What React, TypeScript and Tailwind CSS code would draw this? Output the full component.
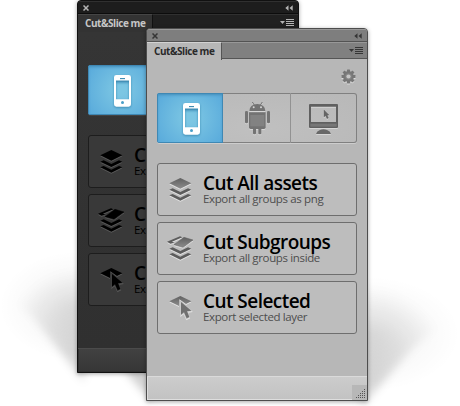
import React from "react";

type Theme = "dark" | "light";

const font = "font-['Open_Sans','Noto_Sans',sans-serif]";

function Layers({ kind, theme }: { kind: "all" | "sub" | "one"; theme: Theme }) {
  const dark = theme === "dark";
  const id = `fill-${kind}-${theme}`;
  const edge = dark ? "#000" : "#5c5c5c";
  const card = dark ? "#393939" : "#c4c4c4";
  return (
    <svg
      className={`h-7 w-7 shrink-0 ${dark ? "drop-shadow-[0_1px_0_#5a5a5a]" : "drop-shadow-[0_1px_0_#e4e4e4]"}`}
      viewBox="0 0 84 84"
    >
      <defs>
        <linearGradient id={id} x1="0" y1="0" x2="0" y2="1">
          <stop offset="0" stopColor={dark ? "#000" : "#606060"} />
          <stop offset="1" stopColor={dark ? "#000" : "#8c8c8c"} />
        </linearGradient>
      </defs>
      {kind === "all" && <path d="M10 22 43 6 76 22 43 38Z" fill={`url(#${id})`} />}
      {kind === "sub" && (
        <>
          <path d="M3 20 42 4 49 7 18 20 25 23 13 26Z" fill={edge} />
          <path d="M24 29 54 7 81 15 51 37Z" fill={`url(#${id})`} stroke={edge} strokeWidth="1.5" />
        </>
      )}
      {kind !== "one" && (
        <>
          <path d="M10 41 20 37 43 48 66 37 76 41 43 57Z" fill={edge} />
          <path d="M10 58 20 54 43 65 66 54 76 58 43 74Z" fill={edge} />
        </>
      )}
      {kind === "one" && (
        <>
          <path d="M10 22 43 6 76 22 60 30 40 16 39 36Z" fill={`url(#${id})`} />
          <path
            d="M45 24V62L54 55 62 73 70 69 63 52 76 50Z"
            fill={dark ? "#000" : "#707070"}
            stroke={card}
            strokeWidth="4"
            paintOrder="stroke"
          />
        </>
      )}
    </svg>
  );
}

function Action({ kind, theme, title, note }: { kind: "all" | "sub" | "one"; theme: Theme; title: string; note: string }) {
  const dark = theme === "dark";
  return (
    <div
      className={`flex h-[53px] w-[200px] gap-[9px] rounded-[3px] border pl-2 pt-3 ${
        dark ? "border-[#1d1d1d] bg-[#393939]" : "border-[#6e6e6e] bg-[#bdbdbd]"
      }`}
    >
      <Layers kind={kind} theme={theme} />
      <div className="-mt-[3px] whitespace-nowrap">
        <div className="text-[19px] font-semibold leading-[20px] tracking-[-0.55px] text-black">{title}</div>
        <div className={`-mt-px text-[11.5px] leading-[13px] tracking-[-0.36px] ${dark ? "text-black" : "text-[#4d4d4d]"}`}>
          {note}
        </div>
      </div>
    </div>
  );
}

function Phone() {
  return (
    <svg className="h-[50px] w-[66px] drop-shadow-[0_1px_1px_#3d8cb4]" viewBox="471 279 198 150">
      <path
        fill="#fff"
        fillRule="evenodd"
        d="M556 309H593Q600 309 600 316V397Q600 404 593 404H556Q549 404 549 397V316Q549 309 556 309ZM555 326V382H594V326ZM567 318V321H582V318Z"
      />
      <path d="M555 327.500H594" stroke="#428eb4" strokeWidth="3" />
      <path d="M567 320H582" stroke="#428eb4" strokeWidth="3" />
      <circle cx="574.500" cy="391.500" r="4.500" fill="#4a9fc8" />
    </svg>
  );
}

function Robot() {
  return (
    <svg className="h-[50px] w-[67px] drop-shadow-[0_1px_0_#d6d6d6]" viewBox="669 279 201 150">
      <g fill="#737373">
        <path d="M748 333Q749 313 772 312 795 313 796 333Z" />
        <path d="M757 306 764 317M787 306 780 317" stroke="#737373" strokeWidth="3" />
        <path d="M747 337H797V382Q797 387 792 387H752Q747 387 747 382Z" />
        <rect x="735" y="333" width="9" height="37" rx="4" />
        <rect x="801" y="333" width="9" height="37" rx="4" />
        <rect x="759" y="382" width="9" height="21" rx="3" />
        <rect x="775" y="382" width="9" height="21" rx="3" />
      </g>
      <rect x="751" y="345" width="42" height="34" fill="#828282" />
      <circle cx="761" cy="322" r="3" fill="#d4d4d4" />
      <circle cx="783" cy="322" r="3" fill="#d4d4d4" />
    </svg>
  );
}

function Monitor() {
  return (
    <svg className="h-[50px] w-[66px] drop-shadow-[0_1px_0_#d6d6d6]" viewBox="873 279 198 150">
      <path
        fill="#606060"
        fillRule="evenodd"
        d="M930 312H1011Q1014 312 1014 315V381Q1014 384 1011 384H930Q927 384 927 381V315Q927 312 930 312ZM933 320V366H1008V320Z"
      />
      <path d="M931 371H1010V380H931Z" fill="#777" />
      <path d="M948 402Q950 393 960 390 970 385 981 390 991 393 993 402Z" fill="#686868" />
      <path d="M972 330V351L977 347 981 356 985 354 982 346 987 345Z" fill="#656565" stroke="#656565" strokeWidth="1" />
    </svg>
  );
}

function Gear() {
  return (
    <svg className="h-[15px] w-[15px] drop-shadow-[0_1px_0_#dadada]" viewBox="-7.5 -7.500 15 15">
      <g fill="#777">
        {[0, 45, 90, 135].map((a) => (
          <rect key={a} x="-1.500" y="-7" width="3" height="14" rx="0.500" transform={`rotate(${a})`} />
        ))}
        <circle r="5.400" />
      </g>
      <circle r="3.200" fill="#858585" />
      <circle r="2.100" fill="#c6c6c6" />
    </svg>
  );
}

function Panel({ theme }: { theme: Theme }) {
  const dark = theme === "dark";
  const ink = dark ? "#b4b4b4" : "#353535";
  return (
    <section
      className={`flex h-[373px] w-[222px] flex-col overflow-hidden rounded-t-[4px] border shadow-[0_1px_4px_rgba(0,0,0,0.35)] ${
        dark ? "border-[#111] bg-[#333]" : "border-[#4d4d4d] bg-[#b7b7b7]"
      }`}
    >
      <header
        className={`flex h-[13px] shrink-0 items-center justify-between border-b border-t pl-[5px] pr-[5px] ${
          dark ? "border-b-[#0c0c0c] border-t-[#303030] bg-[#1d1d1d]" : "border-b-[#535353] border-t-[#999] bg-[#7e7e7e]"
        }`}
      >
        <svg className="h-[6px] w-[6px]" viewBox="0 0 6 6">
          <path d="M.5.5 5.500 5.500M5.500.5.5 5.500" stroke={ink} strokeWidth="1.500" />
        </svg>
        <svg className="h-[6px] w-[8px]" viewBox="0 0 8 6">
          <path d="M3.500.3V5.700L.3 3ZM7.700.3V5.700L4.500 3Z" fill={ink} />
        </svg>
      </header>
      <div className="flex h-[18px] shrink-0">
        <div
          className={`w-[75px] shrink-0 whitespace-nowrap border-r border-t pl-[7px] text-[10px] font-bold leading-[16px] tracking-[-0.45px] ${
            dark ? "border-r-[#111] border-t-[#454545] text-[#c6c6c6]" : "border-r-[#555] border-t-[#d3d3d3] text-[#2a2a2a]"
          }`}
        >
          Cut&amp;Slice me
        </div>
        <div
          className={`flex h-[17px] grow items-center justify-end border-b border-t pr-1 ${
            dark ? "border-b-[#111] border-t-[#303030] bg-[#202020]" : "border-b-[#555] border-t-[#989898] bg-[#808080]"
          }`}
        >
          <svg className="h-[8px] w-[14px]" viewBox="0 0 14 8">
            <path d="M0 2H5L2.500 5Z" fill={ink} />
            <path d="M6 .5H14M6 2.500H14M6 4.500H14M6 6.500H14" stroke={ink} strokeWidth="1" />
          </svg>
        </div>
      </div>
      <div className={`flex grow flex-col px-[10px] ${dark ? "bg-gradient-to-b from-[#353535] to-[#303030]" : ""}`}>
        <div className="flex h-[33px] justify-end pr-[1px] pt-[9px]">{!dark && <Gear />}</div>
        <div
          className={`flex h-[50px] w-[200px] shrink-0 overflow-hidden rounded-[3px] ${
            dark
              ? "shadow-[0_1px_0_#444]"
              : "bg-[radial-gradient(ellipse_at_50%_70%,#c0c0c0,#b8b8b8)] shadow-[inset_0_0_0_1px_#808080,0_1px_0_#cdcdcd]"
          }`}
        >
          <div className="h-[50px] w-[66px] bg-[radial-gradient(circle_at_center,#7cc6e3_10%,#57a9db_100%)] shadow-[inset_0_0_0_1px_#3f88b4,inset_0_2px_3px_#438dba]">
            <Phone />
          </div>
          <div className={`h-[50px] w-[68px] border-r ${dark ? "border-[#222]" : "border-[#929292]"}`}>
            <Robot />
          </div>
          <div className="h-[50px] w-[66px]">
            <Monitor />
          </div>
        </div>
        <div className="mt-5 flex flex-col gap-[6px]">
          <Action kind="all" theme={theme} title="Cut All assets" note="Export all groups as png" />
          <Action kind="sub" theme={theme} title="Cut Subgroups" note="Export all groups inside" />
          <Action kind="one" theme={theme} title="Cut Selected" note="Export selected layer" />
        </div>
      </div>
      <footer
        className={`flex h-[24px] shrink-0 items-end justify-end border-t ${
          dark
            ? "border-t-[#4b4b4b] bg-gradient-to-b from-[#414141] to-[#363636] shadow-[inset_1px_-1px_0_#303030]"
            : "border-t-[#dadada] bg-gradient-to-b from-[#cccccc] to-[#c2c2c2] shadow-[inset_1px_-1px_0_#dedede]"
        }`}
      >
        <svg className="h-[15px] w-[15px]" viewBox="0 0 15 15">
          <rect width="15" height="15" fill={dark ? "#333" : "#b7b7b7"} />
          {[0, 1, 2, 3, 4].map((row) =>
            Array.from({ length: row + 1 }, (_, i) => (
              <rect key={`${row}-${i}`} x={12 - i * 2} y={4 + row * 2} width="1" height="1" fill="#555" />
            )),
          )}
        </svg>
      </footer>
    </section>
  );
}

function FloorShadow() {
  return (
    <svg className="absolute inset-0 h-[406px] w-[460px]" viewBox="0 0 460 406">
      <defs>
        <radialGradient id="cast-left" cx="84" cy="350" r="82" gradientUnits="userSpaceOnUse">
          <stop offset="0" stopColor="#000" stopOpacity="0.17" />
          <stop offset="0.5" stopColor="#000" stopOpacity="0.1" />
          <stop offset="1" stopColor="#000" stopOpacity="0" />
        </radialGradient>
        <radialGradient id="cast-right" cx="361" cy="378" r="92" gradientUnits="userSpaceOnUse">
          <stop offset="0" stopColor="#000" stopOpacity="0.17" />
          <stop offset="0.5" stopColor="#000" stopOpacity="0.1" />
          <stop offset="1" stopColor="#000" stopOpacity="0" />
        </radialGradient>
        <radialGradient id="haze">
          <stop offset="0" stopColor="#000" stopOpacity="0.06" />
          <stop offset="1" stopColor="#000" stopOpacity="0" />
        </radialGradient>
        <filter id="soft" x="-30%" y="-30%" width="160%" height="160%">
          <feGaussianBlur stdDeviation="4" />
        </filter>
      </defs>
      <ellipse cx="77" cy="306" rx="78" ry="55" fill="url(#haze)" />
      <ellipse cx="368" cy="334" rx="92" ry="58" fill="url(#haze)" />
      <g filter="url(#soft)">
        <path d="M84 382 34 318 0 290V240H84Z" fill="url(#cast-left)" />
        <path d="M361 408 412 348 458 312V262H361Z" fill="url(#cast-right)" />
        <path d="M152 402 124 370H152Z" fill="#000" fillOpacity="0.18" />
      </g>
    </svg>
  );
}

export default function App() {
  return (
    <main className={`relative h-[406px] w-[460px] overflow-hidden bg-white ${font}`}>
      <FloorShadow />
      <div className="absolute left-[77px] top-0">
        <Panel theme="dark" />
      </div>
      <div className="absolute left-[146px] top-[28px]">
        <Panel theme="light" />
      </div>
    </main>
  );
}
